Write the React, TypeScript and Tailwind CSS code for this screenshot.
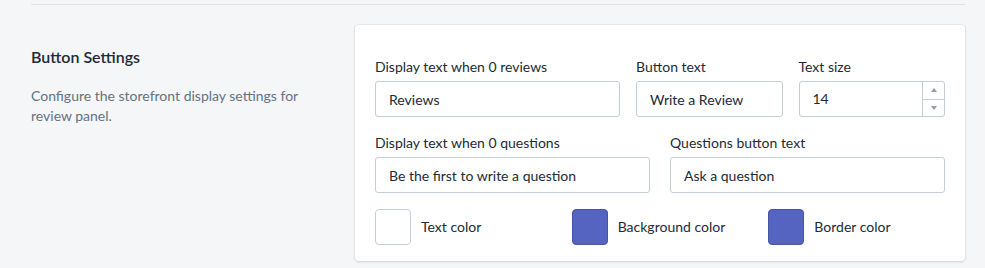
import type { ReactNode } from 'react'

const font = { fontFamily: 'Lato, "Noto Sans", sans-serif' }

function Field({ label, children }: { label: string; children: ReactNode }) {
  return (
    <div className="flex flex-col">
      <label className="mb-1 text-sm leading-5 text-[#212b36]">{label}</label>
      {children}
    </div>
  )
}

function TextInput({ value }: { value: string }) {
  return (
    <input
      readOnly
      value={value}
      className="h-9 w-full rounded-[3px] border border-[#c4cdd5] bg-white px-[13px] text-sm text-[#212b36] outline-none"
    />
  )
}

function NumberInput({ value }: { value: string }) {
  return (
    <div className="flex h-9 w-full rounded-[3px] border border-[#c4cdd5] bg-white">
      <div className="flex flex-1 items-center px-[13px] text-sm text-[#212b36]">{value}</div>
      <div className="flex w-[22px] flex-col border-l border-[#c4cdd5]">
        <div className="flex flex-1 items-center justify-center border-b border-[#c4cdd5]">
          <svg width="6" height="4" viewBox="0 0 6 4">
            <path d="M3 0L6 4H0z" fill="#919eab" />
          </svg>
        </div>
        <div className="flex flex-1 items-center justify-center">
          <svg width="6" height="4" viewBox="0 0 6 4">
            <path d="M0 0h6L3 4z" fill="#919eab" />
          </svg>
        </div>
      </div>
    </div>
  )
}

function ColorPick({ color, border, label }: { color: string; border: string; label: string }) {
  return (
    <div className="flex items-center gap-[10px]">
      <div
        className="h-9 w-9 rounded-[4px] border"
        style={{ backgroundColor: color, borderColor: border }}
      />
      <span className="text-sm text-[#212b36]">{label}</span>
    </div>
  )
}

export default function App() {
  return (
    <div className="min-h-[268px] bg-[#f4f6f8] pl-[31px] pr-[20px] pt-1" style={font}>
      <div className="border-t border-[#dfe3e8]" />
      <div className="mt-5 flex">
        <div className="flex-1 pr-5 pt-[20px]">
          <h2 className="text-base font-semibold leading-6 text-[#212b36]">Button Settings</h2>
          <p className="mt-[17px] max-w-[290px] text-sm leading-5 text-[#637381]">
            Configure the storefront display settings for review panel.
          </p>
        </div>
        <div className="w-[610px] rounded-[4px] bg-white px-5 pb-4 pt-8 shadow-[0_0_0_1px_rgba(63,63,68,0.05),0_1px_3px_0_rgba(63,63,68,0.15)]">
          <div className="grid grid-cols-[245px_1fr_1fr] gap-4">
            <Field label="Display text when 0 reviews">
              <TextInput value="Reviews" />
            </Field>
            <Field label="Button text">
              <TextInput value="Write a Review" />
            </Field>
            <Field label="Text size">
              <NumberInput value="14" />
            </Field>
          </div>
          <div className="mt-4 grid grid-cols-2 gap-5">
            <Field label="Display text when 0 questions">
              <TextInput value="Be the first to write a question" />
            </Field>
            <Field label="Questions button text">
              <TextInput value="Ask a question" />
            </Field>
          </div>
          <div className="mt-4 grid grid-cols-3 gap-5">
            <ColorPick color="#ffffff" border="#c4cdd5" label="Text color" />
            <ColorPick color="#5563c1" border="#4a559f" label="Background color" />
            <ColorPick color="#5563c1" border="#4a559f" label="Border color" />
          </div>
        </div>
      </div>
    </div>
  )
}
